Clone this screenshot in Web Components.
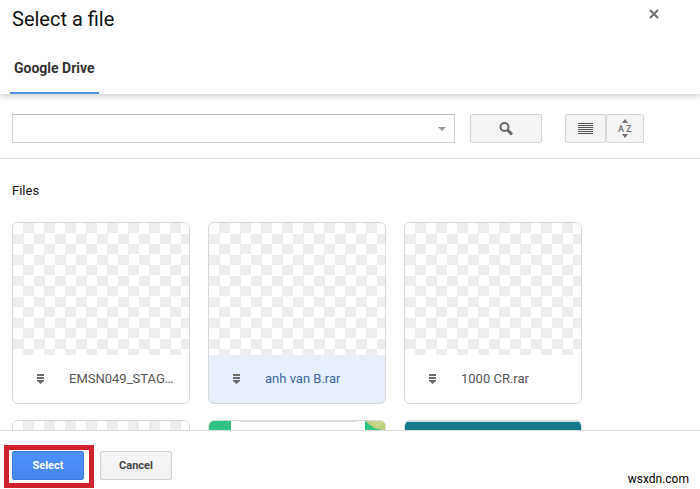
<!DOCTYPE html>
<html lang="en">
<head>
<meta charset="utf-8">
<meta name="viewport" content="width=device-width, initial-scale=1">
<title>Select a file</title>
<style>
    body{
        margin:0;
        background:#fff;
        color:#111;
        font-family:Roboto, "Liberation Sans", sans-serif;
        font-size:13px;
    }
</style>
</head>
<body>
<file-picker>
    <picker-header slot="header" heading="Select a file">
        <a href="#drive">Google Drive</a>
    </picker-header>
    <picker-toolbar slot="toolbar"></picker-toolbar>
    <file-grid label="Files">
        <file-card>EMSN049_STAGE_FILES.rar</file-card>
        <file-card selected>anh van B.rar</file-card>
        <file-card>1000 CR.rar</file-card>
        <file-card></file-card>
        <file-card>
            <svg slot="preview" viewBox="0 0 176 132" preserveAspectRatio="none" aria-hidden="true">
                <rect width="176" height="132" fill="#2fc283"/>
                <rect x="22" width="134" height="132" fill="#fff"/>
                <rect x="31" width="116" height="1" fill="#d7dee3"/>
                <path d="M156 0H176V9H173Q165 8 161 4Z" fill="#bdd07b"/>
                <path d="M161 0L168 6L176 2V0Z" fill="#c9d58c"/>
            </svg>
        </file-card>
        <file-card>
            <svg slot="preview" viewBox="0 0 176 132" preserveAspectRatio="none" aria-hidden="true">
                <rect width="176" height="132" fill="#157a8c"/>
                <rect width="176" height="1" fill="#c6e3e8"/>
            </svg>
        </file-card>
    </file-grid>
    <picker-footer slot="footer">wsxdn.com</picker-footer>
</file-picker>

<script>
function attachTemplate(element, html) {
  const template = document.createElement('template');
  template.innerHTML = html;
  const shadow = element.attachShadow({mode: 'open'});
  shadow.append(template.content.cloneNode(true));
  return shadow;
}


class FilePicker extends HTMLElement {
  constructor() {
    super();
    attachTemplate(this, `
<style>
    :host{
        display:flex;
        flex-direction:column;
        height:100vh;
    }
    main{
        flex:1;
        min-height:0;
        overflow:hidden;
    }
</style>
<slot name="header"></slot>
<slot name="toolbar"></slot>
<main><slot></slot></main>
<slot name="footer"></slot>
`);
  }
}

customElements.define('file-picker', FilePicker);


class PickerHeader extends HTMLElement {
  constructor() {
    super();
    const shadow = attachTemplate(this, `
<style>
    :host{
        display:block;
        box-shadow:0 2px 6px rgba(0, 0, 0, 0.2);
    }
    .title{
        display:flex;
        justify-content:space-between;
        align-items:flex-start;
        padding:7px 39px 0 12px;
    }
    h1{
        margin:0;
        font-size:20px;
        line-height:24px;
        font-weight:400;
    }
    button{
        display:flex;
        padding:0;
        border:none;
        background:none;
        cursor:pointer;
    }
    nav{
        display:flex;
        padding:12px 10px 0;
    }
    ::slotted(a){
        padding:14px 4px 13px;
        border-bottom:2px solid #5590df;
        color:#333;
        font-size:14px;
        line-height:22px;
        font-weight:700;
        text-decoration:none;
    }
</style>
<div class="title">
    <h1></h1>
    <button type="button" aria-label="Close">
        <svg width="14" height="14" viewBox="0 0 14 14" fill="none" stroke="#707070" stroke-width="2"><path d="M3 3L11 11M11 3L3 11"/></svg>
    </button>
</div>
<nav><slot></slot></nav>
`);
    shadow.querySelector('h1').innerText = this.getAttribute('heading');
  }
}

customElements.define('picker-header', PickerHeader);


class PickerToolbar extends HTMLElement {
  constructor() {
    super();
    attachTemplate(this, `
<style>
    :host{
        display:flex;
        align-items:center;
        padding:20px 56px 15px 12px;
        border-bottom:1px solid #ddd;
    }
    .search{
        display:flex;
        flex:1;
        min-width:0;
        box-sizing:border-box;
        height:29px;
        margin-right:15px;
        border:1px solid #d0d0d0;
        border-top-color:#bbb;
    }
    input{
        flex:1;
        min-width:0;
        padding:0 8px;
        border:none;
        outline:none;
        background:none;
        font:inherit;
    }
    button{
        display:flex;
        align-items:center;
        justify-content:center;
        box-sizing:border-box;
        height:29px;
        padding:0;
        border:1px solid #d6d6d6;
        border-radius:2px;
        background:#f4f4f4;
        cursor:pointer;
    }
    .search button{
        width:24px;
        height:auto;
        border:none;
        background:none;
    }
    .submit{
        width:72px;
        margin-right:23px;
    }
    .list{width:41px;}
    .sort{width:38px;}
    text{
        font-family:Roboto, sans-serif;
        font-size:9px;
        font-weight:500;
    }
</style>
<div class="search">
    <input type="text" aria-label="Search">
    <button type="button" aria-label="Search options">
        <svg width="8" height="5" viewBox="0 0 8 5" fill="#999"><path d="M0 1H8L4 5Z"/></svg>
    </button>
</div>
<button class="submit" type="button" aria-label="Search">
    <svg width="16" height="16" viewBox="0 0 16 16" fill="none" stroke="#666"><circle cx="6.5" cy="6" r="4" stroke-width="2"/><path d="M9.5 9L14 13.5" stroke-width="3"/></svg>
</button>
<button class="list" type="button" aria-label="List view">
    <svg width="15" height="11" viewBox="0 0 15 11" stroke="#555"><path d="M0 .5H15M0 2.5H15M0 4.5H15M0 6.5H15M0 8.5H15M0 10.5H15"/></svg>
</button>
<button class="sort" type="button" aria-label="Sort">
    <svg width="16" height="19" viewBox="0 0 16 19" fill="#707070"><path d="M8 0L11 4H5ZM5 15H11L8 19Z"/><text x="1" y="13">A</text><text x="9" y="13">Z</text></svg>
</button>
`);
  }
}

customElements.define('picker-toolbar', PickerToolbar);


class FileGrid extends HTMLElement {
  constructor() {
    super();
    const shadow = attachTemplate(this, `
<style>
    :host{
        display:block;
        padding:22px 12px 0;
    }
    h2{
        margin:0 0 21px;
        font-size:13px;
        line-height:20px;
        font-weight:400;
    }
    .grid{
        display:grid;
        grid-template-columns:repeat(auto-fill, 178px);
        gap:16px 18px;
    }
</style>
<h2></h2>
<div class="grid"><slot></slot></div>
`);
    shadow.querySelector('h2').innerText = this.getAttribute('label');
  }
}

customElements.define('file-grid', FileGrid);


class FileCard extends HTMLElement {
  constructor() {
    super();
    const shadow = attachTemplate(this, `
<style>
    :host{
        display:block;
        min-width:0;
    }
    button{
        display:block;
        box-sizing:border-box;
        width:100%;
        padding:0;
        overflow:hidden;
        border:1px solid #d9d9d9;
        border-radius:6px;
        background:#fff;
        color:#555;
        font:inherit;
        text-align:left;
        cursor:pointer;
    }
    :host([selected]) button{
        background:#e7effd;
        color:#3f64a8;
    }
    .preview{
        height:132px;
        background:repeating-conic-gradient(#eee 0 25%, #fff 0 50%) 0 0 / 21px 21px;
    }
    ::slotted(svg){
        display:block;
        width:100%;
        height:100%;
    }
    .caption{
        display:flex;
        align-items:center;
        gap:25px;
        height:48px;
        padding:0 14px 0 24px;
    }
    .caption svg{flex:none;}
    .name{
        min-width:0;
        overflow:hidden;
        line-height:20px;
        text-overflow:ellipsis;
        white-space:nowrap;
    }
</style>
<button type="button">
    <div class="preview"><slot name="preview"></slot></div>
    <div class="caption">
        <svg width="7" height="10" viewBox="0 0 7 10" fill="#6b6b6b"><path d="M0 0H7V2H0ZM0 3H7V5H0ZM0 6H7V7L3.5 10L0 7Z"/></svg>
        <div class="name"><slot></slot></div>
    </div>
</button>
`);
    shadow.querySelector('button').setAttribute('aria-pressed', this.hasAttribute('selected'));
  }
}

customElements.define('file-card', FileCard);


class PickerFooter extends HTMLElement {
  constructor() {
    super();
    attachTemplate(this, `
<style>
    :host{
        display:flex;
        align-items:flex-start;
        gap:16px;
        padding:20px 11px 0 12px;
        border-top:1px solid #ddd;
        background:#fff;
    }
    button{
        box-sizing:border-box;
        width:72px;
        height:29px;
        padding:0;
        border:1px solid #d2d2d2;
        border-radius:2px;
        background:linear-gradient(#f6f6f6, #f1f1f1);
        color:#444;
        font:inherit;
        font-size:11px;
        font-weight:700;
        cursor:pointer;
    }
    .primary{
        border-color:#3f78e0;
        background:linear-gradient(#4d90fe, #4787ed);
        color:#fff;
    }
    .marked{
        position:relative;
        display:flex;
        margin-bottom:9px;
    }
    .marked::after{
        content:"";
        position:absolute;
        inset:-6px -10px -8px -8px;
        border:5px solid #d1232f;
        pointer-events:none;
    }
    .site{
        align-self:flex-end;
        margin-left:auto;
        color:#000;
        font-size:12px;
        line-height:20px;
    }
</style>
<div class="marked"><button class="primary" type="button">Select</button></div>
<button type="button">Cancel</button>
<div class="site"><slot></slot></div>
`);
  }
}

customElements.define('picker-footer', PickerFooter);
</script>
</body>
</html>
